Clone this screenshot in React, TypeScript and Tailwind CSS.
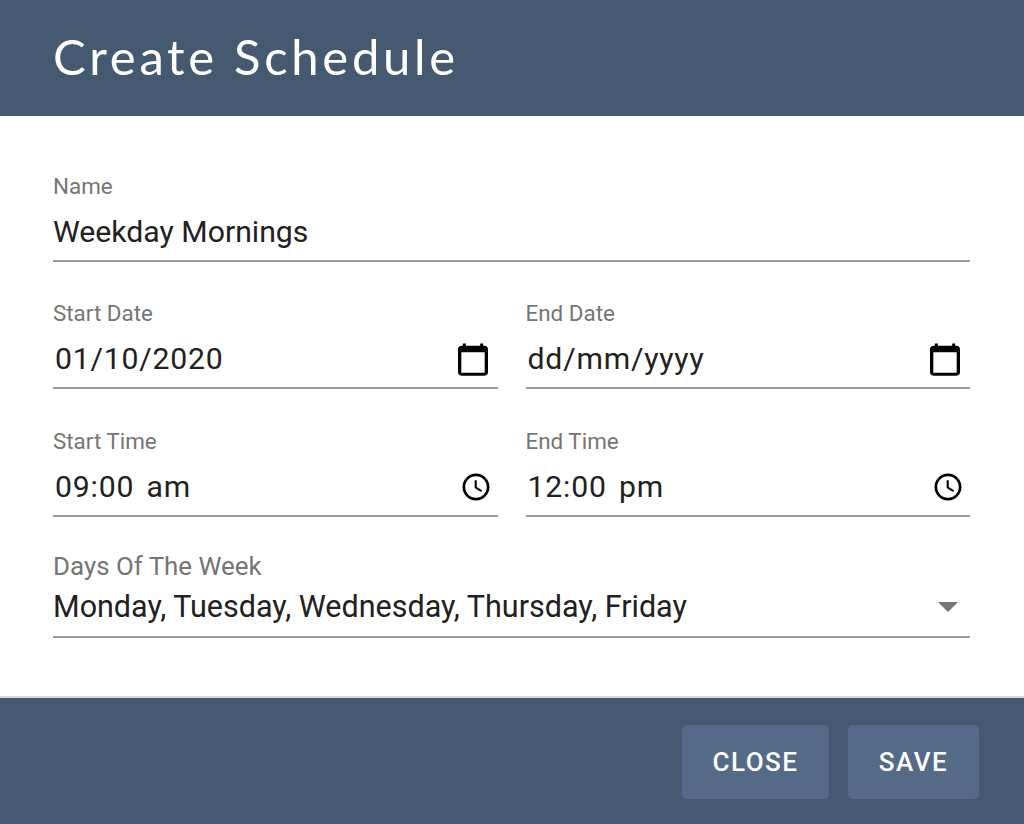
const font = { fontFamily: '"Roboto", "Liberation Sans", sans-serif' };

function CalendarIcon() {
  return (
    <svg viewBox="0 0 24 24" className="w-[40px] h-[40px] text-black" fill="currentColor">
      <path d="M19 4h-.9V2.7h-1.8V4H7.7V2.7H5.9V4H5C3.9 4 3 4.9 3 6v14c0 1.1.9 2 2 2h14c1.1 0 2-.9 2-2V6c0-1.1-.9-2-2-2zm0 16.2H5V8h14v12.2z" />
    </svg>
  );
}

function ClockIcon() {
  return (
    <svg viewBox="0 0 24 24" className="w-[36px] h-[36px] text-black" fill="currentColor">
      <path d="M11.99 3C7.03 3 3 7.03 3 12s4.03 9 8.99 9C16.96 21 21 16.97 21 12s-4.04-9-9.01-9zM12 19.2c-3.98 0-7.2-3.22-7.2-7.2S8.02 4.8 12 4.8s7.2 3.22 7.2 7.2-3.22 7.2-7.2 7.2z" />
      <path d="M12.5 7.5h-1.4v5.2l4.3 2.6.7-1.15-3.6-2.15z" />
    </svg>
  );
}

function Field({
  label,
  value,
  icon,
  spaced,
}: {
  label: string;
  value: string;
  icon?: React.ReactNode;
  spaced?: boolean;
}) {
  return (
    <div>
      <div className="text-[22.4px] leading-[28px] text-[#757575]">{label}</div>
      <div className="flex items-center justify-between h-[52px] mt-[6px] border-b-2 border-[#9a9a9a] box-content pb-[2px]">
        <span
          className={`text-[30.2px] leading-[46px] text-[#212121] ${
            spaced ? "tracking-[0.8px] pl-[2px] [word-spacing:4px]" : ""
          }`}
        >
          {value}
        </span>
        {icon}
      </div>
    </div>
  );
}

export default function App() {
  return (
    <div className="flex flex-col w-[1024px] h-[824px] bg-white" style={font}>
      <header className="flex items-center h-[116px] px-[53px] pb-[2px] bg-[#455a70]">
        <h1
          className="text-[49px] text-white tracking-[3.7px] font-normal"
          style={{ fontFamily: '"Lato", sans-serif' }}
        >
          Create Schedule
        </h1>
      </header>

      <main className="flex-1 pl-[53px] pr-[54px] pt-[56px]">
        <Field label="Name" value="Weekday Mornings" />

        <div className="grid grid-cols-2 gap-x-[28px] mt-[37px]">
          <Field
            label="Start Date"
            value="01/10/2020"
            icon={<span className="flex justify-center w-[50px]"><CalendarIcon /></span>}
            spaced
          />
          <Field
            label="End Date"
            value="dd/mm/yyyy"
            icon={<span className="flex justify-center w-[50px]"><CalendarIcon /></span>}
            spaced
          />
        </div>

        <div className="grid grid-cols-2 gap-x-[28px] mt-[38px]">
          <Field
            label="Start Time"
            value="09:00 am"
            icon={<span className="flex justify-center w-[44px]"><ClockIcon /></span>}
            spaced
          />
          <Field
            label="End Time"
            value="12:00 pm"
            icon={<span className="flex justify-center w-[44px]"><ClockIcon /></span>}
            spaced
          />
        </div>

        <div className="mt-[35px]">
          <div className="text-[25.9px] leading-[28px] text-[#757575]">Days Of The Week</div>
          <div className="flex items-center justify-between h-[46px] mt-[4px] border-b-2 border-[#9a9a9a] box-content pb-[6px]">
            <span className="text-[30.5px] leading-[46px] text-[#212121]">
              Monday, Tuesday, Wednesday, Thursday, Friday
            </span>
            <span className="w-0 h-0 mr-[12px] border-x-[10px] border-x-transparent border-t-[10px] border-t-[#757575]" />
          </div>
        </div>
      </main>

      <footer className="flex items-center justify-end gap-[19px] h-[128px] pt-[2px] pr-[45px] bg-[#455a70] border-t-2 border-[#d9dde1]">
        <button className="w-[147px] h-[74px] rounded-[5px] bg-[#546a87] text-[26px] tracking-[1.5px] font-medium text-white">
          CLOSE
        </button>
        <button className="w-[131px] h-[74px] rounded-[5px] bg-[#546a87] text-[26px] tracking-[1.5px] font-medium text-white">
          SAVE
        </button>
      </footer>
    </div>
  );
}
